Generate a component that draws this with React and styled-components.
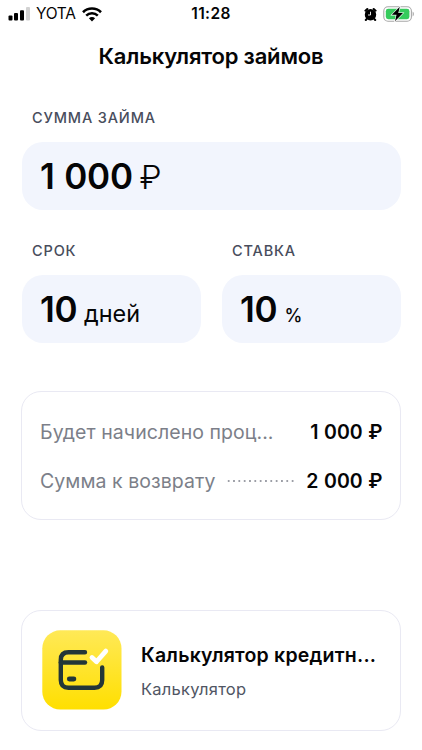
import React from "react";
import styled, { createGlobalStyle } from "styled-components";

const GlobalStyle = createGlobalStyle`
  * {
    box-sizing: border-box;
  }
  body {
    margin: 0;
    background: #fff;
    color: #050506;
    font-family: Inter, "Liberation Sans", sans-serif;
  }
`;

const Screen = styled.div`
  width: 422px;
  height: 750px;
  overflow: hidden;
  display: flex;
  flex-direction: column;
`;

const StatusBar = styled.div`
  height: 28px;
  padding: 0 8px;
  display: grid;
  grid-template-columns: 1fr auto 1fr;
  align-items: center;
`;

const StatusSide = styled.div`
  height: 27px;
  display: flex;
  align-items: center;
  justify-content: ${(p) => (p.$end ? "flex-end" : "flex-start")};
  gap: ${(p) => (p.$end ? "6px" : "0")};
  svg {
    display: block;
    flex: none;
  }
`;

const Carrier = styled.span`
  margin: 0 6px 0 6px;
  font-size: 15.5px;
  line-height: 28px;
  letter-spacing: -0.3px;
`;

const Time = styled.span`
  font-size: 15.5px;
  font-weight: 600;
  line-height: 28px;
  letter-spacing: 0.4px;
`;

const Title = styled.h1`
  margin: 13px 0 0;
  font-size: 22px;
  font-weight: 600;
  line-height: 30px;
  text-align: center;
  white-space: nowrap;
  letter-spacing: -0.18px;
`;

const Form = styled.div`
  padding: 0 21.5px;
  margin-top: 36px;
  display: grid;
  grid-template-columns: 1fr 1fr;
  column-gap: 21px;
  row-gap: 31px;
`;

const Field = styled.div`
  grid-column: ${(p) => (p.$wide ? "1 / -1" : "auto")};
`;

const Label = styled.div`
  padding: ${(p) => (p.$wide ? "1px" : "0")} 0 0 10.5px;
  height: 34.5px;
  color: #484d5c;
  font-size: 14.5px;
  font-weight: 450;
  line-height: 20px;
  letter-spacing: 0.85px;
`;

const Input = styled.div`
  height: 68px;
  padding-left: 18.5px;
  border-radius: 21px;
  background: #f2f5fd;
  display: flex;
  align-items: baseline;
  line-height: 68px;
  white-space: nowrap;
`;

const Amount = styled.span`
  font-size: 35px;
  font-weight: 600;
  letter-spacing: -0.2px;
  word-spacing: 1px;
`;

const Unit = styled.span`
  margin-left: ${(p) => p.$gap};
  font-size: ${(p) => p.$size};
  font-weight: ${(p) => p.$weight || 400};
`;

const Card = styled.section`
  margin: ${(p) => p.$top} 21px 0;
  border: 1.5px solid #e9e9f3;
  border-radius: 20px;
`;

const Summary = styled(Card)`
  height: 129px;
  padding: 15px 17.5px 0 18px;
`;

const Row = styled.div`
  height: 49px;
  display: flex;
  align-items: center;
  white-space: nowrap;
`;

const RowName = styled.span`
  color: #7c7f89;
  font-size: 19.5px;
  letter-spacing: 0.06px;
`;

const Dots = styled.span`
  flex: 1;
  height: 2px;
  margin: 0 11px 0 11px;
  background: ${(p) =>
    p.$hidden
      ? "none"
      : "radial-gradient(circle, #9c9ea6 0.7px, transparent 1.1px) 0 0 / 5.33px 2px repeat-x"};
`;

const RowValue = styled.span`
  font-size: 19.5px;
  font-weight: 600;
  word-spacing: 0.7px;
`;

const AppCard = styled(Card)`
  height: 121px;
  padding: 0 20px 1px;
  display: flex;
  align-items: center;
  svg {
    display: block;
    flex: none;
  }
`;

const AppInfo = styled.div`
  margin: 2px 0 0 19px;
  white-space: nowrap;
`;

const AppName = styled.div`
  font-size: 19.5px;
  font-weight: 600;
  line-height: 30px;
  letter-spacing: 0.22px;
`;

const AppKind = styled.div`
  margin-top: 5px;
  color: #505563;
  font-size: 16.5px;
  line-height: 28px;
  letter-spacing: 0.25px;
`;

const Signal = () => (
  <svg width="22" height="14" viewBox="0 0 22 14">
    <rect x="0.5" y="8.5" width="4" height="5" rx="1" />
    <rect x="6" y="6" width="4" height="7.5" rx="1" />
    <rect x="12" y="3.2" width="4" height="10.3" rx="1" />
    <rect x="18" y="0" width="4" height="13.5" rx="1" fill="#d2d2d2" />
  </svg>
);

const Wifi = () => (
  <svg width="20" height="15" viewBox="0 0 20 15" fill="none" stroke="#000">
    <path d="M1 5.2C6 0.3 14 0.3 19 5.2" strokeWidth="2.6" />
    <path d="M4.2 8.6C7.4 5.5 12.6 5.5 15.8 8.6" strokeWidth="2.5" />
    <path d="M6.9 11.3C8.7 9.6 11.3 9.6 13.1 11.3L10 14.5Z" fill="#000" stroke="none" />
  </svg>
);

const Alarm = () => (
  <svg width="13" height="15" viewBox="0 0 13 15">
    <circle cx="6.5" cy="7.7" r="5.7" />
    <path
      d="M1.4 3.7L3.3 2M11.6 3.7L9.7 2M2.8 11.8L1.8 13M10.2 11.8L11.2 13"
      stroke="#000"
      strokeWidth="2"
      strokeLinecap="round"
    />
    <path d="M6.5 4.7V8H4" fill="none" stroke="#fff" strokeWidth="0.9" />
  </svg>
);

const Battery = () => (
  <svg width="31" height="16" viewBox="0 0 31 16">
    <rect x="0.8" y="0.8" width="27.6" height="14.4" rx="4.2" fill="#fff" stroke="#a8a8a8" strokeWidth="1.1" />
    <rect x="2.8" y="2.8" width="23.6" height="10.4" rx="2.4" fill="#35cb5c" />
    <path d="M29.6 5.5C31.3 6.2 31.3 9.8 29.6 10.5Z" fill="#a8a8a8" />
    <path
      d="M16.8 0.8L8.8 8.8H13.5L12 15.2L20 7.1H15.3Z"
      stroke="#fff"
      strokeWidth="1.2"
      paintOrder="stroke"
    />
  </svg>
);

const AppIcon = () => (
  <svg width="80" height="80" viewBox="0 0 80 80" fill="none">
    <defs>
      <linearGradient id="yellow" x1="0" y1="0" x2="0" y2="1">
        <stop offset="0" stopColor="#ffe957" />
        <stop offset="1" stopColor="#ffdf00" />
      </linearGradient>
    </defs>
    <rect x="0.3" y="0.3" width="79.2" height="79.2" rx="18" fill="url(#yellow)" />
    <g stroke="#233638" strokeWidth="4.4" strokeLinecap="round" strokeLinejoin="round">
      <path d="M43 22.3H26.5Q18.8 22.3 18.8 30V50Q18.8 57.7 26.5 57.7H52.5Q60.2 57.7 60.2 50V37.5" />
      <path d="M18.8 32.5H43" />
      <path d="M27.3 49H31.9" strokeWidth="4.8" />
    </g>
    <path
      d="M50 27.5L54.5 31.8L63.8 21.1"
      stroke="#fff"
      strokeWidth="4.8"
      strokeLinecap="round"
      strokeLinejoin="round"
    />
  </svg>
);

export default function App() {
  return (
    <Screen>
      <GlobalStyle />
      <StatusBar>
        <StatusSide>
          <Signal />
          <Carrier>YOTA</Carrier>
          <Wifi />
        </StatusSide>
        <Time>11:28</Time>
        <StatusSide $end>
          <Alarm />
          <Battery />
        </StatusSide>
      </StatusBar>
      <Title>Калькулятор займов</Title>
      <Form>
        <Field $wide>
          <Label $wide>СУММА ЗАЙМА</Label>
          <Input>
            <Amount>1 000</Amount>
            <Unit $gap="6.5px" $size="33px" $weight={300}>₽</Unit>
          </Input>
        </Field>
        <Field>
          <Label>СРОК</Label>
          <Input>
            <Amount>10</Amount>
            <Unit $gap="6.5px" $size="23.4px">дней</Unit>
          </Input>
        </Field>
        <Field>
          <Label>СТАВКА</Label>
          <Input>
            <Amount>10</Amount>
            <Unit $gap="7px" $size="18px" $weight={500}>%</Unit>
          </Input>
        </Field>
      </Form>
      <Summary $top="48px">
        <Row>
          <RowName>Будет начислено проц...</RowName>
          <Dots $hidden />
          <RowValue>1 000 ₽</RowValue>
        </Row>
        <Row>
          <RowName>Сумма к возврату</RowName>
          <Dots />
          <RowValue>2 000 ₽</RowValue>
        </Row>
      </Summary>
      <AppCard $top="90px">
        <AppIcon />
        <AppInfo>
          <AppName>Калькулятор кредитн...</AppName>
          <AppKind>Калькулятор</AppKind>
        </AppInfo>
      </AppCard>
    </Screen>
  );
}
